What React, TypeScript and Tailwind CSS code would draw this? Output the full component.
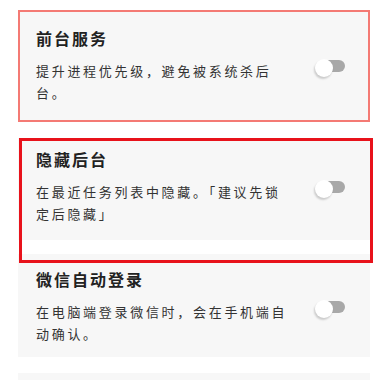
import React from 'react';

type Setting = {
  title: string;
  desc: string;
  cardClass: string;
};

const settings: Setting[] = [
  {
    title: '前台服务',
    desc: '提升进程优先级，避免被系统杀后台。',
    cardClass: 'h-[112px] border-2 border-[#f47a74] pt-[15px] pl-[16px] pr-[23px]',
  },
  {
    title: '隐藏后台',
    desc: '在最近任务列表中隐藏。「建议先锁定后隐藏」',
    cardClass: 'mt-[16px] h-[102px] pt-[10px] pl-[18px] pr-[25px]',
  },
  {
    title: '微信自动登录',
    desc: '在电脑端登录微信时，会在手机端自动确认。',
    cardClass: 'mt-[14px] h-[103px] pt-[14px] pl-[18px] pr-[25px]',
  },
  {
    title: '',
    desc: '',
    cardClass: 'mt-[16px] h-[100px] pt-[14px] pl-[18px] pr-[25px]',
  },
];

const Toggle: React.FC = () => (
  <div className="relative w-[30px] h-[18px] mt-[-1px] shrink-0">
    <div className="absolute right-0 top-[1px] w-[24px] h-[12px] rounded-full bg-[#a8a8a8]" />
    <div className="absolute left-0 top-0 w-[18px] h-[18px] rounded-full bg-white shadow-[-1px_2px_2px_rgba(0,0,0,0.18)]" />
  </div>
);

const SettingCard: React.FC<{ item: Setting }> = ({ item }) => (
  <div className={`bg-[#f7f7f7] ${item.cardClass}`}>
    {item.title && (
      <>
        <div className="text-[16px] leading-[22px] font-bold tracking-[2px] text-[#222]">{item.title}</div>
        <div className="mt-[11px] flex items-start">
          <p className="w-[260px] text-[13px] leading-[22px] tracking-[2.7px] text-[#333]">{item.desc}</p>
          <div className="ml-auto">
            <Toggle />
          </div>
        </div>
      </>
    )}
  </div>
);

export default function App() {
  return (
    <div
      className="relative h-[380px] w-[383px] overflow-hidden bg-white"
      style={{ fontFamily: '"Noto Sans CJK SC", "Noto Sans", sans-serif' }}
    >
      <div className="ml-[18px] w-[352px] pt-[10px]">
        {settings.map((item, i) => (
          <SettingCard key={i} item={item} />
        ))}
      </div>
      {/* highlight box */}
      <div className="absolute left-[19px] top-[138px] w-[354px] h-[125px] border-[3px] border-[#e8121b] pointer-events-none" />
    </div>
  );
}
